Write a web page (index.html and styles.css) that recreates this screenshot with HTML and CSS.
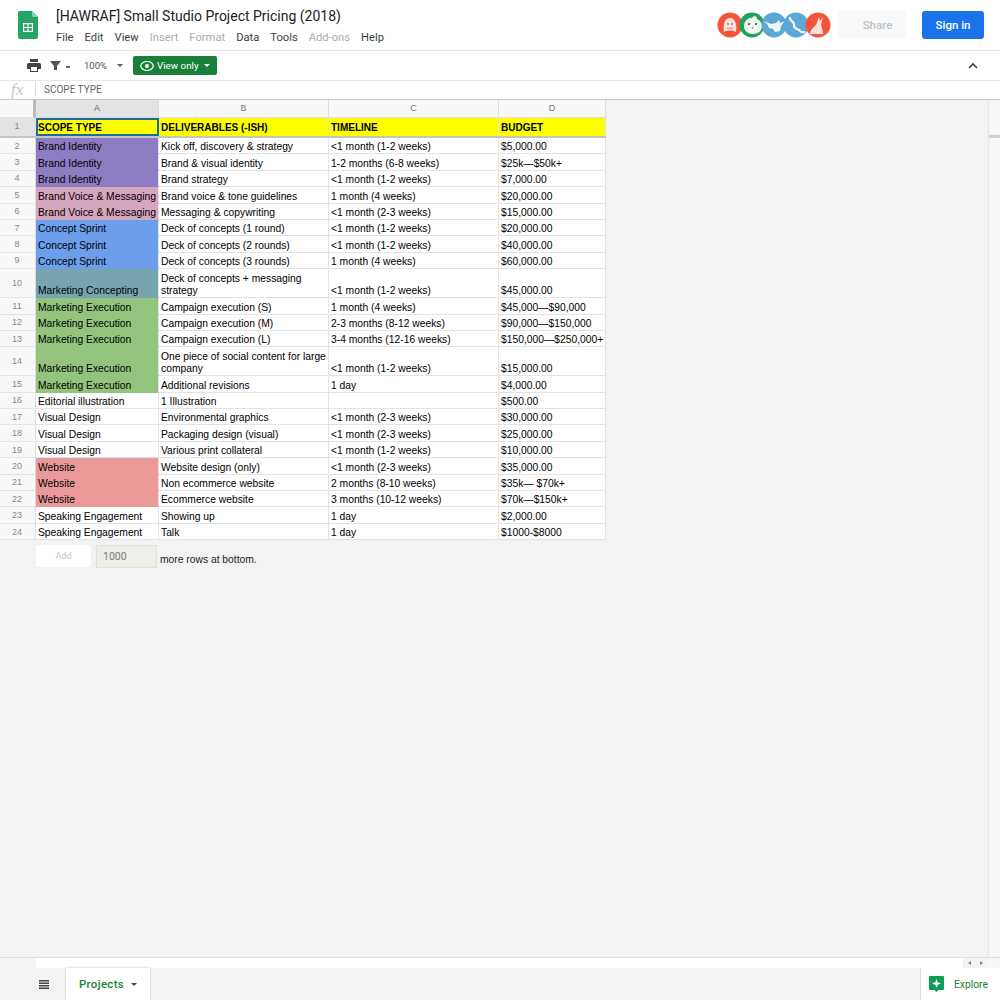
FILE: index.html
```html
<!DOCTYPE html>
<html lang="en">
<head>
<meta charset="utf-8">
<title>[HAWRAF] Small Studio Project Pricing (2018)</title>
<link rel="stylesheet" href="styles.css">
</head>
<body>
<header class="top">
  <svg class="logo" viewBox="0 0 20 28" width="20" height="28"><path d="M2 0h12l6 6v20a2 2 0 0 1-2 2H2a2 2 0 0 1-2-2V2a2 2 0 0 1 2-2z" fill="#23a566"/><path d="M14 0l6 6h-4.500a1.500 1.500 0 0 1-1.500-1.500z" fill="#8ed1b1"/><path d="M5 12h10v9H5z" fill="#fff"/><path d="M6.200 13.200h3.200v2.700H6.200zM10.600 13.200h3.200v2.700h-3.200zM6.200 17.100h3.200v2.700H6.200zM10.600 17.100h3.200v2.700h-3.200z" fill="#23a566"/></svg>
  <div class="titles">
    <h1 class="doc-title">[HAWRAF] Small Studio Project Pricing (2018)</h1>
    <nav class="menu"><span>File</span><span>Edit</span><span>View</span><span class="off">Insert</span><span class="off">Format</span><span>Data</span><span>Tools</span><span class="off">Add-ons</span><span>Help</span></nav>
  </div>
  <div class="avatars">
    <svg class="av" viewBox="0 0 26 26"><circle cx="13" cy="13" r="12.500" fill="#f4553a"/><path d="M7 20c-1-6 0-14 6-14s7 8 6 14c-1.500-1-3.500-1.500-6-1.500S8.500 19 7 20z" fill="#fde3dc"/><circle cx="11" cy="12" r="1" fill="#f4553a"/><circle cx="15" cy="12" r="1" fill="#f4553a"/><path d="M10 15.500h6v1.500h-6z" fill="#f4a594"/></svg>
    <svg class="av" viewBox="0 0 26 26"><circle cx="13" cy="13" r="12.500" fill="#1da35a"/><path d="M5 14c0-4 2-6 4-7a2.500 2.500 0 0 1 4-.5 2.500 2.500 0 0 1 5 .5c3 1.500 5 4 5 7 0 5-4 8-9 8s-9-3-9-8z" fill="#f3f7f1"/><circle cx="10" cy="12" r="1" fill="#1f3b2c"/><circle cx="17" cy="12" r="1" fill="#1f3b2c"/><path d="M12.500 15.500h2l-1 1.200z" fill="#1f3b2c"/></svg>
    <svg class="av" viewBox="0 0 26 26"><circle cx="13" cy="13" r="12.500" fill="#5aa7d8"/><path d="M3 9l7 3 5-1 3-3 1 3 5-2-4 5-1 5-5 1-2-3-4-1-2-4z" fill="#eef6fb"/></svg>
    <svg class="av" viewBox="0 0 26 26"><circle cx="13" cy="13" r="12.500" fill="#5aa7d8"/><path d="M7 5c-1 5 5 4 4 8s5 4 6 6 3 1 5 1" fill="none" stroke="#eef6fb" stroke-width="2.200"/></svg>
    <svg class="av" viewBox="0 0 26 26"><circle cx="13" cy="13" r="12.500" fill="#f4553a"/><path d="M5 22c0-4 4-7 6-9l3-8 1 4 3-4-2 8c1 3 2 6 2 9z" fill="#fde3dc"/></svg>
  </div>
  <button class="share">Share</button>
  <button class="signin">Sign in</button>
</header>

<section class="toolbar">
  <svg class="print" viewBox="0 0 14 13" width="14" height="13"><path d="M3 0h8v3H3zM1.500 4h11A1.500 1.500 0 0 1 14 5.500V10h-3v3H3v-3H0V5.500A1.500 1.500 0 0 1 1.500 4z" fill="#444"/><path d="M4 8h6v4H4z" fill="#fff"/></svg>
  <svg class="filter" viewBox="0 0 11 11" width="11" height="11"><path d="M0 1h11L7 6v4H4V6z" fill="#555"/></svg>
  <i class="mini"></i>
  <span class="zoomv">100%</span>
  <i class="caret"></i>
  <div class="viewonly">
    <svg viewBox="0 0 14 10" width="14" height="10"><path d="M7 .5C4 .5 1.500 2.300.5 5c1 2.700 3.500 4.500 6.500 4.500s5.500-1.800 6.500-4.500C12.500 2.300 10 .5 7 .5z" fill="none" stroke="#fff" stroke-width="1.200"/><circle cx="7" cy="5" r="2" fill="#fff"/></svg>
    <span>View only</span>
    <i class="caret white"></i>
  </div>
  <svg class="collapse" viewBox="0 0 10 7" width="10" height="7"><path d="M1 6l4-4 4 4" fill="none" stroke="#444" stroke-width="1.700"/></svg>
</section>

<section class="formula">
  <span class="fx">fx</span>
  <span class="fsep"></span>
  <span class="fval">SCOPE TYPE</span>
</section>

<div class="work">
  <div class="stage">
    <div class="sheet">
      <div class="row head"><div class="corner"></div><div class="ch sel">A</div><div class="ch">B</div><div class="ch">C</div><div class="ch">D</div></div>
      <div class="row first"><div class="rh sel">1</div><div class="c y b active">SCOPE TYPE</div><div class="c y b">DELIVERABLES (-ISH)</div><div class="c y b">TIMELINE</div><div class="c y b">BUDGET</div></div>
      <div class="freeze"></div>
      <div class="row"><div class="rh">2</div><div class="c brand">Brand Identity</div><div class="c">Kick off, discovery &amp; strategy</div><div class="c">&lt;1 month (1-2 weeks)</div><div class="c">$5,000.00</div></div>
      <div class="row"><div class="rh">3</div><div class="c brand">Brand Identity</div><div class="c">Brand &amp; visual identity</div><div class="c">1-2 months (6-8 weeks)</div><div class="c">$25k—$50k+</div></div>
      <div class="row"><div class="rh">4</div><div class="c brand">Brand Identity</div><div class="c">Brand strategy</div><div class="c">&lt;1 month (1-2 weeks)</div><div class="c">$7,000.00</div></div>
      <div class="row"><div class="rh">5</div><div class="c voice">Brand Voice &amp; Messaging</div><div class="c">Brand voice &amp; tone guidelines</div><div class="c">1 month (4 weeks)</div><div class="c">$20,000.00</div></div>
      <div class="row"><div class="rh">6</div><div class="c voice">Brand Voice &amp; Messaging</div><div class="c">Messaging &amp; copywriting</div><div class="c">&lt;1 month (2-3 weeks)</div><div class="c">$15,000.00</div></div>
      <div class="row"><div class="rh">7</div><div class="c sprint">Concept Sprint</div><div class="c">Deck of concepts (1 round)</div><div class="c">&lt;1 month (1-2 weeks)</div><div class="c">$20,000.00</div></div>
      <div class="row"><div class="rh">8</div><div class="c sprint">Concept Sprint</div><div class="c">Deck of concepts (2 rounds)</div><div class="c">&lt;1 month (1-2 weeks)</div><div class="c">$40,000.00</div></div>
      <div class="row"><div class="rh">9</div><div class="c sprint">Concept Sprint</div><div class="c">Deck of concepts (3 rounds)</div><div class="c">1 month (4 weeks)</div><div class="c">$60,000.00</div></div>
      <div class="row tall"><div class="rh">10</div><div class="c mconcept">Marketing Concepting</div><div class="c">Deck of concepts + messaging strategy</div><div class="c">&lt;1 month (1-2 weeks)</div><div class="c">$45,000.00</div></div>
      <div class="row"><div class="rh">11</div><div class="c mexec">Marketing Execution</div><div class="c">Campaign execution (S)</div><div class="c">1 month (4 weeks)</div><div class="c">$45,000—$90,000</div></div>
      <div class="row"><div class="rh">12</div><div class="c mexec">Marketing Execution</div><div class="c">Campaign execution (M)</div><div class="c">2-3 months (8-12 weeks)</div><div class="c">$90,000—$150,000</div></div>
      <div class="row"><div class="rh">13</div><div class="c mexec">Marketing Execution</div><div class="c">Campaign execution (L)</div><div class="c">3-4 months (12-16 weeks)</div><div class="c">$150,000—$250,000+</div></div>
      <div class="row tall"><div class="rh">14</div><div class="c mexec">Marketing Execution</div><div class="c">One piece of social content for large company</div><div class="c">&lt;1 month (1-2 weeks)</div><div class="c">$15,000.00</div></div>
      <div class="row"><div class="rh">15</div><div class="c mexec">Marketing Execution</div><div class="c">Additional revisions</div><div class="c">1 day</div><div class="c">$4,000.00</div></div>
      <div class="row"><div class="rh">16</div><div class="c">Editorial illustration</div><div class="c">1 Illustration</div><div class="c"></div><div class="c">$500.00</div></div>
      <div class="row"><div class="rh">17</div><div class="c">Visual Design</div><div class="c">Environmental graphics</div><div class="c">&lt;1 month (2-3 weeks)</div><div class="c">$30,000.00</div></div>
      <div class="row"><div class="rh">18</div><div class="c">Visual Design</div><div class="c">Packaging design (visual)</div><div class="c">&lt;1 month (2-3 weeks)</div><div class="c">$25,000.00</div></div>
      <div class="row"><div class="rh">19</div><div class="c">Visual Design</div><div class="c">Various print collateral</div><div class="c">&lt;1 month (1-2 weeks)</div><div class="c">$10,000.00</div></div>
      <div class="row"><div class="rh">20</div><div class="c web">Website</div><div class="c">Website design (only)</div><div class="c">&lt;1 month (2-3 weeks)</div><div class="c">$35,000.00</div></div>
      <div class="row"><div class="rh">21</div><div class="c web">Website</div><div class="c">Non ecommerce website</div><div class="c">2 months (8-10 weeks)</div><div class="c">$35k— $70k+</div></div>
      <div class="row"><div class="rh">22</div><div class="c web">Website</div><div class="c">Ecommerce website</div><div class="c">3 months (10-12 weeks)</div><div class="c">$70k—$150k+</div></div>
      <div class="row"><div class="rh">23</div><div class="c">Speaking Engagement</div><div class="c">Showing up</div><div class="c">1 day</div><div class="c">$2,000.00</div></div>
      <div class="row"><div class="rh">24</div><div class="c">Speaking Engagement</div><div class="c">Talk</div><div class="c">1 day</div><div class="c">$1000-$8000</div></div>
    </div>
    <div class="addrows">
      <button class="add">Add</button>
      <div class="count">1000</div>
      <span class="more">more rows at bottom.</span>
    </div>
  </div>
  <aside class="vscroll"><div class="vtop"></div><div class="vfreeze"></div></aside>
</div>

<div class="hscroll">
  <div class="hleft"></div>
  <div class="htrack"></div>
  <div class="harrows"><i class="al"></i><i class="ar"></i></div>
  <div class="hend"></div>
</div>

<footer class="tabs">
  <svg class="allsheets" viewBox="0 0 10 9" width="10" height="9"><path d="M0 0h10v1.500H0zM0 2.500h10V4H0zM0 5h10v1.500H0zM0 7.500h10V9H0z" fill="#444"/></svg>
  <div class="tab"><span>Projects</span><i class="caret dark"></i></div>
  <div class="explore">
    <svg viewBox="0 0 15 16" width="15" height="16"><path d="M1 0h13a1 1 0 0 1 1 1v12a1 1 0 0 1-1 1h-4.500L7.500 16l-2-2H1a1 1 0 0 1-1-1V1a1 1 0 0 1 1-1z" fill="#0f9d58"/><path d="M7.500 3l1.200 3.300L12 7.500 8.700 8.700 7.500 12 6.300 8.700 3 7.500l3.300-1.200z" fill="#fff"/></svg>
    <span>Explore</span>
  </div>
</footer>
</body>
</html>
```
FILE: styles.css
```css
* { box-sizing: border-box; }
html, body { margin: 0; padding: 0; }
body {
  width: 1000px; height: 1000px; overflow: hidden;
  display: flex; flex-direction: column;
  font-family: "Liberation Sans", Arial, sans-serif;
  background: #f3f3f3; color: #000;
}
button { font-family: Roboto, sans-serif; border: 0; padding: 0; }

/* top bar */
.top {
  height: 51px; flex: none; background: #fff; border-bottom: 1px solid #e3e3e3;
  display: flex; align-items: flex-start; font-family: Roboto, sans-serif;
}
.logo { margin: 11px 18px 0 18px; flex: none; }
.titles { flex: none; width: 660px; }
.doc-title { margin: 7px 0 0; font-size: 14px; line-height: 19px; font-weight: 400; color: #202124; white-space: nowrap; }
.menu { display: flex; gap: 11px; margin-top: 4px; font-size: 11.200px; line-height: 15px; color: #3c4043; }
.menu .off { color: #a9acb0; }
.avatars { display: flex; margin: 12px 0 0 1px; width: 121px; flex: none; }
.av { width: 26px; height: 26px; flex: none; margin-right: -4px; }
.share { width: 68px; height: 27px; margin: 11px 0 0 0; background: #f8f9fa; color: #bfc1c3; font-size: 11.500px; font-weight: 500; border-radius: 3px; padding-left: 11px; }
.signin { width: 62px; height: 28px; margin: 11px 0 0 16px; background: #1a73e8; color: #fff; font-size: 11.500px; font-weight: 500; border-radius: 3px; }

/* toolbar */
.toolbar {
  height: 30px; flex: none; background: #fff; border-bottom: 1px solid #e6e6e6;
  display: flex; align-items: center; font-family: Roboto, sans-serif;
}
.print { margin-left: 27px; flex: none; }
.filter { margin-left: 9px; flex: none; }
.mini { width: 4px; height: 1.500px; background: #666; margin: 3px 0 0 5px; }
.zoomv { margin-left: 14px; width: 24px; font-size: 9.500px; color: #555; }
.caret { display: block; width: 0; height: 0; border: 3px solid transparent; border-top: 3.500px solid #555; border-bottom: 0; margin-left: 9px; }
.viewonly {
  width: 84px; height: 19px; margin-left: 10px; background: #188038; color: #fff; border-radius: 2px;
  display: flex; align-items: center; padding-left: 7px; font-size: 9.800px; font-weight: 400;
}
.viewonly span { margin-left: 3px; white-space: nowrap; }
.caret.white { border-top-color: #fff; margin-left: 5px; }
.collapse { margin-left: auto; margin-right: 22px; }

/* formula bar */
.formula {
  height: 19px; flex: none; background: #fff; border-bottom: 1px solid #ccc;
  display: flex; align-items: center; padding-bottom: 2px;
}
.fx { width: 35px; padding-left: 11px; font-family: "Liberation Serif", serif; font-style: italic; font-size: 17px; line-height: 17px; color: #c4c4c4; }
.fsep { width: 1px; height: 14px; background: #dcdcdc; }
.fval { margin-left: 8px; font-size: 10px; color: #666; font-family: Roboto, sans-serif; }

/* sheet */
.work { height: 857px; flex: none; display: flex; }
.stage { width: 988px; flex: none; }
.sheet { width: 606px; }
.row { display: grid; grid-template-columns: 36px 123px 170px 170px 107px; height: 16.400px; }
.row.tall { height: 29px; }
.row.head { height: 18px; }
.row.first { height: 17.500px; }
.corner { background: #f8f8f8; border-right: 3px solid #bbb; border-bottom: 1px solid #ddd; }
.ch { background: #f8f8f8; border-right: 1px solid #ddd; border-bottom: 1px solid #ddd; font-size: 9px; color: #777; text-align: center; line-height: 17px; }
.ch.sel { background: #e2e3e5; color: #666; }
.rh { background: #f8f8f8; border-right: 1px solid #ddd; border-bottom: 1px solid #e4e4e4; font-size: 9px; color: #888; display: flex; align-items: center; justify-content: center; padding-right: 1px; }
.rh.sel { background: #e2e3e5; }
.c {
  background: #fff; border-right: 1px solid #e2e3e3; border-bottom: 1px solid #e2e3e3;
  font-size: 10.300px; line-height: 12px; padding: 0 2px 0 2px; display: flex; align-items: flex-end; overflow: visible; white-space: nowrap;
}
.tall .c { white-space: normal; }
.c.b { font-weight: 700; font-size: 10px; padding-bottom: 1px; border-bottom-color: transparent; }
.c.y { background: #ff0; }
.c.active { border: 2px solid #1b6a9e; padding: 0; align-items: flex-end; }
.freeze { height: 2.500px; background: #c4c4c4; }
.brand, .voice, .sprint, .mconcept, .mexec, .web { border-bottom-color: transparent; }
.brand { background: #8e7cc3; }
.voice { background: #d5a6bd; }
.sprint { background: #6d9eeb; }
.mconcept { background: #76a5af; }
.mexec { background: #93c47d; }
.web { background: #ea9999; }

.addrows { display: flex; align-items: flex-start; margin: 5px 0 0 36px; }
.add { width: 55px; height: 22px; background: #fff; color: #c2c2c2; font-size: 9px; }
.count { width: 61px; height: 23px; margin-left: 5px; background: #eeeee8; border: 1px solid #e0e0da; color: #777; font-family: Roboto, sans-serif; font-size: 10.500px; line-height: 21px; padding-left: 6px; }
.more { margin: 8px 0 0 3px; font-size: 10.300px; line-height: 13px; color: #222; }

.vscroll { width: 12px; flex: none; background: #f7f7f7; border-left: 1px solid #e4e4e4; }
.vtop { height: 35px; }
.vfreeze { height: 3px; background: #d0d0d4; }

/* bottom */
.hscroll { height: 11px; flex: none; display: flex; border-top: 1px solid #ddd; }
.hleft { width: 36px; background: #f3f3f3; }
.htrack { width: 927px; background: #fff; }
.harrows { width: 25px; background: #f3f3f3; display: flex; align-items: center; justify-content: space-around; }
.al { border: 2px solid transparent; border-right: 3px solid #888; border-left: 0; }
.ar { border: 2px solid transparent; border-left: 3px solid #888; border-right: 0; }
.hend { width: 12px; background: #f7f7f7; }

.tabs { height: 32px; flex: none; background: #f1f3f4; display: flex; align-items: stretch; font-family: Roboto, sans-serif; }
.allsheets { margin: 12px 17px 0 39px; flex: none; }
.tab {
  width: 84px; background: #fff; box-shadow: 0 0 2px rgba(0,0,0,.25);
  display: flex; align-items: center; padding-left: 13px;
  color: #188038; font-size: 11.300px; font-weight: 500; letter-spacing: .4px;
}
.caret.dark { border-top-color: #444; margin-left: 7px; }
.explore {
  margin-left: auto; width: 80px; background: #fff; border-left: 1px solid #dadce0;
  display: flex; align-items: center; padding-left: 8px; color: #188038; font-size: 10.300px;
}
.explore span { margin-left: 10px; }
```
